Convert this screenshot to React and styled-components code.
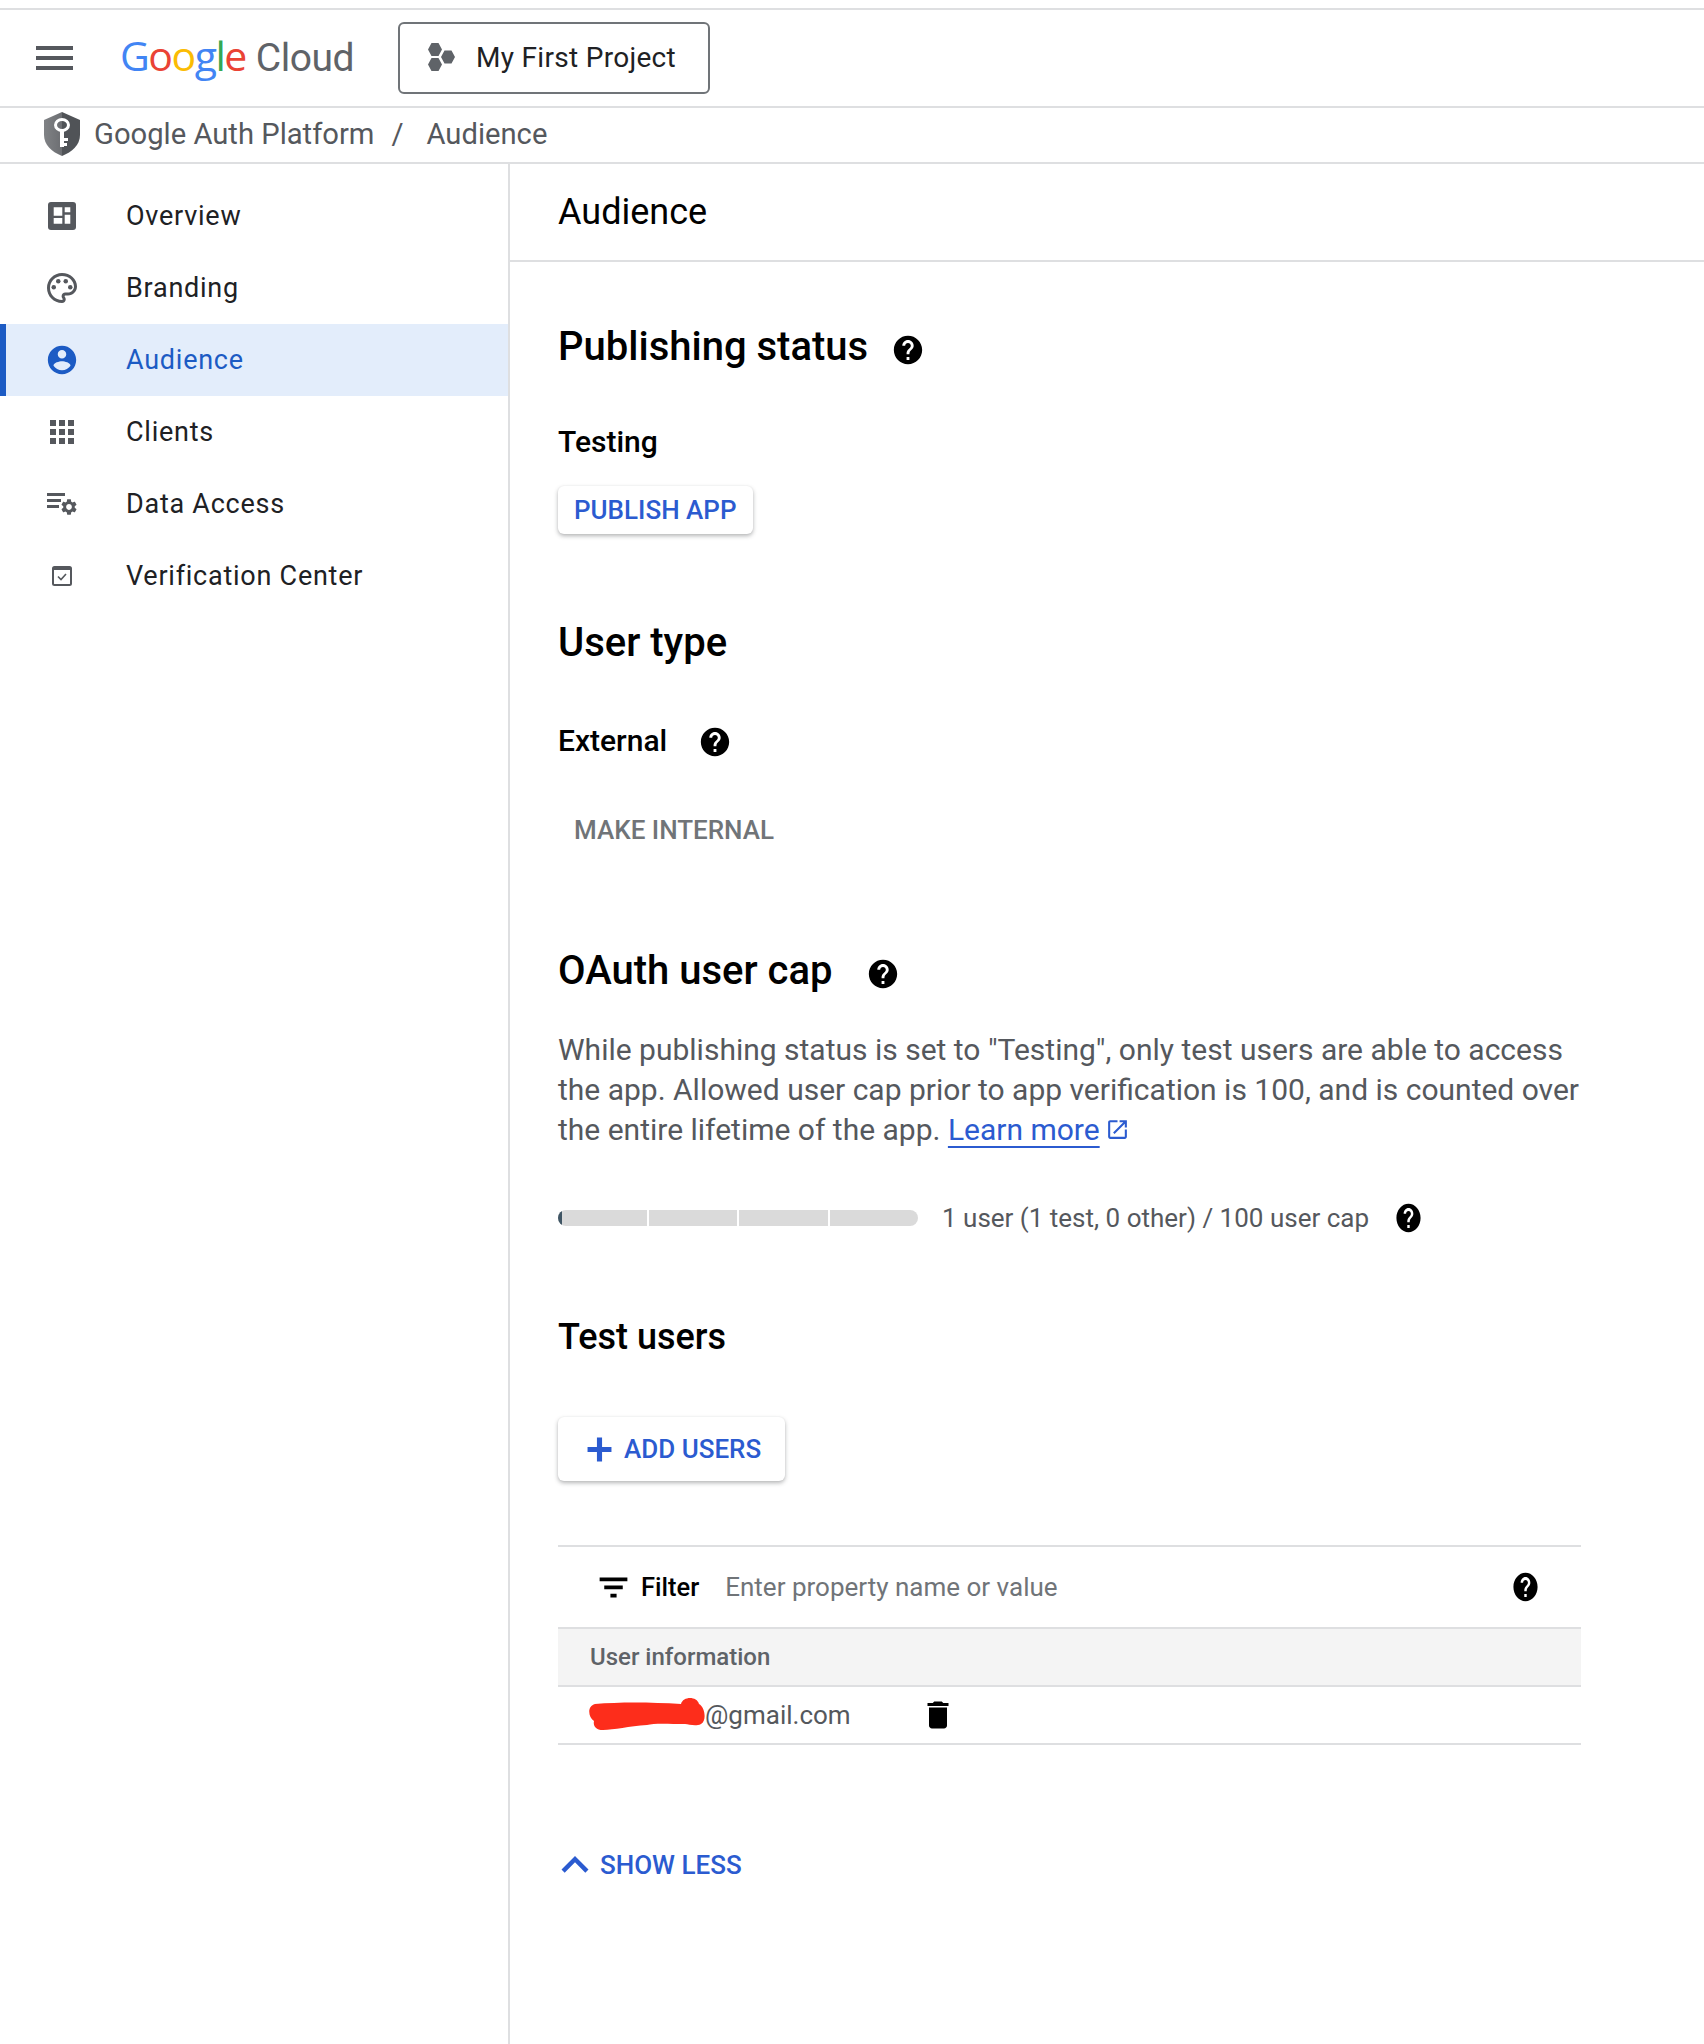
import React from 'react'
import styled, { createGlobalStyle } from 'styled-components'

const GlobalStyle = createGlobalStyle`
	html, body {
		margin: 0;
		padding: 0;
		background: #fff;
		font-family: Roboto, "Liberation Sans", sans-serif;
	}
	* {
		box-sizing: border-box;
	}
`

const BLUE = '#2b5bd0'
const LINE = '#dedfe1'

const paths = {
	help: 'M12 2C6.48 2 2 6.48 2 12s4.48 10 10 10 10-4.48 10-10S17.52 2 12 2zm1 17h-2v-2h2v2zm2.07-7.75l-.9.92C13.45 12.9 13 13.5 13 15h-2v-.5c0-1.1.45-2.1 1.17-2.83l1.24-1.26c.37-.36.59-.86.59-1.41 0-1.1-.9-2-2-2s-2 .9-2 2H8c0-2.21 1.79-4 4-4s4 1.79 4 4c0 .88-.36 1.68-.93 2.25z',
	account: 'M12 2C6.48 2 2 6.48 2 12s4.48 10 10 10 10-4.48 10-10S17.52 2 12 2zm0 3c1.66 0 3 1.34 3 3s-1.34 3-3 3-3-1.34-3-3 1.34-3 3-3zm0 14.2c-2.5 0-4.71-1.28-6-3.22.03-1.99 4-3.08 6-3.08 1.99 0 5.97 1.09 6 3.08-1.29 1.94-3.5 3.22-6 3.22z',
	palette: 'M12 22C6.49 22 2 17.51 2 12S6.49 2 12 2s10 4.04 10 9c0 3.31-2.69 6-6 6h-1.77c-.28 0-.5.22-.5.5 0 .12.05.23.13.33.41.47.64 1.06.64 1.67 0 1.38-1.12 2.5-2.5 2.5zm0-18c-4.41 0-8 3.59-8 8s3.59 8 8 8c.28 0 .5-.22.5-.5 0-.16-.08-.28-.14-.35-.41-.46-.63-1.05-.63-1.65 0-1.38 1.12-2.5 2.5-2.5H16c2.21 0 4-1.79 4-4 0-3.86-3.59-7-8-7z',
	trash: 'M6 19c0 1.1.9 2 2 2h8c1.1 0 2-.9 2-2V7H6v12zM19 4h-3.5l-1-1h-5l-1 1H5v2h14V4z',
	filter: 'M10 18.500h4v-2.500h-4v2.500zM3 5.500V8h18V5.500H3zm3 7.700h12v-2.500H6v2.500z',
	plus: 'M19 13.500h-5.500V19h-3v-5.500H5v-3h5.500V5h3v5.500H19z',
	chevron: 'M7.41 15.41L12 10.83l4.59 4.58L18 14l-6-6-6 6z',
	external: 'M19 19H5V5h7V3H5c-1.11 0-2 .9-2 2v14c0 1.1.89 2 2 2h14c1.1 0 2-.9 2-2v-7h-2v7zM14 3v2h3.59l-9.83 9.83 1.41 1.41L19 6.41V10h2V3h-7z',
	apps: 'M4 4h4v4H4zM10 4h4v4h-4zM16 4h4v4h-4zM4 10h4v4H4zM10 10h4v4h-4zM16 10h4v4h-4zM4 16h4v4H4zM10 16h4v4h-4zM16 16h4v4h-4z',
}

const GEAR = 'M19.14 12.94c.04-.3.06-.61.06-.94 0-.32-.02-.64-.07-.94l2.03-1.58c.18-.14.23-.41.12-.61l-1.92-3.32c-.12-.22-.37-.29-.59-.22l-2.39.96c-.5-.38-1.03-.7-1.62-.94l-.36-2.54c-.04-.24-.24-.41-.48-.41h-3.84c-.24 0-.43.17-.47.41l-.36 2.54c-.59.24-1.13.57-1.62.94l-2.39-.96c-.22-.08-.47 0-.59.22L2.74 8.87c-.12.21-.08.47.12.61l2.03 1.58c-.05.3-.09.63-.09.94s.02.64.07.94l-2.03 1.58c-.18.14-.23.41-.12.61l1.92 3.32c.12.22.37.29.59.22l2.39-.96c.5.38 1.03.7 1.62.94l.36 2.54c.05.24.24.41.48.41h3.84c.24 0 .44-.17.47-.41l.36-2.54c.59-.24 1.13-.56 1.62-.94l2.39.96c.22.08.47 0 .59-.22l1.92-3.32c.12-.22.07-.47-.12-.61l-2.01-1.58zM12 15.6c-1.98 0-3.6-1.62-3.6-3.6s1.62-3.6 3.6-3.6 3.6 1.62 3.6 3.6-1.62 3.6-3.6 3.6z'

const Icon = ({ name, size = 24, width, color = '#000' }) => (
	<Svg viewBox='0 0 24 24' preserveAspectRatio='none' $size={size} $width={width || size} $color={color}>
		<path d={paths[name]}/>
		{name === 'palette' && (
			<>
				<circle cx='6.5' cy='11.5' r='1.5'/>
				<circle cx='9.5' cy='7.5' r='1.5'/>
				<circle cx='14.5' cy='7.5' r='1.5'/>
				<circle cx='17.5' cy='11.5' r='1.5'/>
			</>
		)}
	</Svg>
)

const Help = ({ gap, lift = 7, narrow }) => (
	<HelpSlot $gap={gap} $lift={lift}>
		<Icon name='help' size={34} width={narrow ? 29 : 34}/>
	</HelpSlot>
)

const DashboardIcon = () => (
	<svg width='28' height='28' viewBox='0 0 28 28'>
		<rect width='28' height='28' rx='3' fill='#55585d'/>
		<path d='M5.700 5.300h8.600v8.400H5.700zM5.700 16h8.600v5.700H5.700zM16.700 5.300h5.600v5H16.700zM16.700 12.700h5.600v9H16.700z' fill='#fff'/>
	</svg>
)

const DataAccessIcon = () => (
	<svg width='30' height='23' viewBox='0 0 30 23'>
		<path d='M0 0h18v3H0zM0 6h14v3H0zM0 12h12v3H0z' fill='#55585d'/>
		<path d={GEAR} transform='translate(12.4 4.4) scale(0.8)' fill='#55585d'/>
	</svg>
)

const VerificationIcon = () => (
	<svg width='28' height='28' viewBox='0 0 28 28'>
		<rect x='5' y='5' width='18' height='18' rx='1.5' fill='none' stroke='#55585d' strokeWidth='2'/>
		<path d='M5 5h18v3H5z' fill='#55585d'/>
		<path d='M10 14.500l3 3 5-5.500' fill='none' stroke='#55585d' strokeWidth='1.600'/>
	</svg>
)

const ProjectIcon = () => (
	<svg width='27' height='28' viewBox='0 0 27 28'>
		<path d='M3.500 0h7l3.500 6.500-3.500 6.500h-7L0 6.500zM3.500 15h7l3.500 6.500-3.500 6.500h-7L0 21.500zM16.500 7.500h7l3.500 6.500-3.500 6.500h-7L13 14z' fill='#5f6368'/>
	</svg>
)

const ShieldIcon = () => (
	<svg width='36' height='44' viewBox='0 0 36 44'>
		<defs>
			<linearGradient id='shield' x1='0' x2='1' y1='0' y2='0'>
				<stop offset='0' stopColor='#808285'/>
				<stop offset='0.5' stopColor='#6c6e72'/>
				<stop offset='0.5' stopColor='#505357'/>
				<stop offset='1' stopColor='#505357'/>
			</linearGradient>
		</defs>
		<path d='M18 0L36 8v15c0 10-8 17-18 21C8 40 0 33 0 23V8z' fill='url(#shield)'/>
		<ellipse cx='18' cy='13' rx='6.500' ry='5.500' fill='none' stroke='#fff' strokeWidth='3'/>
		<path d='M16 18h4v17h-4zM19 26h5v3h-5zM19 31h4v3h-4z' fill='#fff'/>
	</svg>
)

const GoogleLogo = () => (
	<Logo>
		<LogoLetter $color='#4285f4'>G</LogoLetter>
		<LogoLetter $color='#ea4335'>o</LogoLetter>
		<LogoLetter $color='#fbbc04'>o</LogoLetter>
		<LogoLetter $color='#4285f4'>g</LogoLetter>
		<LogoLetter $color='#34a853'>l</LogoLetter>
		<LogoLetter $color='#ea4335'>e</LogoLetter>
		<LogoCloud>Cloud</LogoCloud>
	</Logo>
)

const navItems = [
	{ label: 'Overview', icon: <DashboardIcon/> },
	{ label: 'Branding', icon: <Icon name='palette' size={36} color='#55585d'/> },
	{ label: 'Audience', icon: <Icon name='account' size={34} color='#1c5bc4'/>, active: true },
	{ label: 'Clients', icon: <Icon name='apps' size={36} color='#55585d'/> },
	{ label: 'Data Access', icon: <DataAccessIcon/> },
	{ label: 'Verification Center', icon: <VerificationIcon/> },
]

export default function App () {
	return (
		<Page>
			<GlobalStyle/>
			<TopStrip/>
			<Header>
				<MenuButton>
					<MenuBar/>
					<MenuBar/>
					<MenuBar/>
				</MenuButton>
				<GoogleLogo/>
				<ProjectButton>
					<ProjectIcon/>
					<span>My First Project</span>
				</ProjectButton>
			</Header>
			<Breadcrumb>
				<ShieldIcon/>
				<Crumb>Google Auth Platform</Crumb>
				<CrumbSlash>/</CrumbSlash>
				<Crumb>Audience</Crumb>
			</Breadcrumb>
			<Body>
				<Sidebar>
					{navItems.map(item => (
						<NavItem key={item.label} $active={item.active}>
							<NavIcon>{item.icon}</NavIcon>
							<span>{item.label}</span>
						</NavItem>
					))}
				</Sidebar>
				<Main>
					<TitleBar>Audience</TitleBar>
					<Content>
						<Heading $top={60}>Publishing status<Help gap={23}/></Heading>
						<SubHeading $top={51}>Testing</SubHeading>
						<RaisedButton $top={25} $height={48} $left={16} $right={16}>PUBLISH APP</RaisedButton>

						<Heading $top={84}>User type</Heading>
						<SubHeading $top={54}>External<Help gap={31} lift={4}/></SubHeading>
						<FlatButton>MAKE INTERNAL</FlatButton>

						<Heading $top={92}>OAuth user cap<Help gap={34}/></Heading>
						<Paragraph>
							While publishing status is set to "Testing", only test users are able to access
							the app. Allowed user cap prior to app verification is 100, and is counted over
							the entire lifetime of the app. <LearnMore>Learn more</LearnMore>
							<ExternalSlot><Icon name='external' size={25} color={BLUE}/></ExternalSlot>
						</Paragraph>

						<CapRow>
							<CapBar>
								<CapFill/>
								<CapSegment/>
								<CapSegment/>
								<CapSegment/>
								<CapSegment/>
							</CapBar>
							<CapLabel>1 user (1 test, 0 other) / 100 user cap</CapLabel>
							<Help gap={25} lift={0} narrow/>
						</CapRow>

						<Heading $top={75} $size={36}>Test users</Heading>
						<RaisedButton $top={56} $height={64} $left={21} $right={24}>
							<Icon name='plus' size={41} color={BLUE}/>
							ADD USERS
						</RaisedButton>

						<Table>
							<FilterRow>
								<Icon name='filter' size={37}/>
								<FilterLabel>Filter</FilterLabel>
								<FilterHint>Enter property name or value</FilterHint>
								<Help lift={0} narrow/>
							</FilterRow>
							<HeaderRow>User information</HeaderRow>
							<UserRow>
								<EmailCell>
									<Scribble viewBox='0 0 117 34'>
										<path d='M6 7C30 5 60 5 92 7C94 -1 108 -1 110 7C116 10 118 24 112 27C106 30 100 27 96 27C80 27 65 26 58 28C40 29 25 33 14 33C6 33 4 28 5 24C-1 20 -2 9 6 7z' fill='#fd2d1b'/>
									</Scribble>
									@gmail.com
								</EmailCell>
								<TrashSlot><Icon name='trash' size={36}/></TrashSlot>
							</UserRow>
						</Table>

						<ShowLess>
							<ChevronSlot><Icon name='chevron' size={54} color={BLUE}/></ChevronSlot>
							SHOW LESS
						</ShowLess>
					</Content>
				</Main>
			</Body>
		</Page>
	)
}

const Page = styled.div`
	display: flex;
	flex-direction: column;
	width: 100%;
	height: 2044px;
	overflow: hidden;
	background: #fff;
`

const TopStrip = styled.div`
	height: 10px;
	flex: none;
	border-bottom: 2px solid ${LINE};
`

const Header = styled.header`
	display: flex;
	align-items: center;
	height: 98px;
	flex: none;
	padding-left: 36px;
	border-bottom: 2px solid ${LINE};
`

const MenuButton = styled.div`
	display: flex;
	flex-direction: column;
	justify-content: space-between;
	width: 37px;
	height: 24px;
`

const MenuBar = styled.div`
	height: 4px;
	background: #55585d;
`

const Logo = styled.div`
	display: flex;
	align-items: baseline;
	width: 233px;
	margin: 0 0 6px 47px;
	font-family: "Open Sans", Roboto, sans-serif;
	font-size: 41px;
	letter-spacing: -1.500px;
`

const LogoLetter = styled.span`
	color: ${props => props.$color};
`

const LogoCloud = styled.span`
	margin-left: 10px;
	color: #5f6368;
	font-family: Roboto, sans-serif;
	font-size: 39px;
	letter-spacing: -0.500px;
`

const ProjectButton = styled.div`
	display: flex;
	align-items: center;
	gap: 21px;
	width: 312px;
	height: 72px;
	margin-left: 45px;
	padding: 0 0 2px 28px;
	border: 2px solid #707478;
	border-radius: 6px;
	color: #202124;
	font-size: 28px;
	letter-spacing: 0.300px;
`

const Breadcrumb = styled.nav`
	display: flex;
	align-items: center;
	height: 56px;
	flex: none;
	padding: 0 0 2px 44px;
	border-bottom: 2px solid ${LINE};
	color: #55585d;
	font-size: 29.2px;
`

const Crumb = styled.span`
	margin-left: 14px;
`

const CrumbSlash = styled.span`
	margin: 0 9px 0 17px;
`

const Body = styled.div`
	display: grid;
	grid-template-columns: 510px 1fr;
	flex: 1;
`

const Sidebar = styled.aside`
	padding-top: 16px;
	border-right: 2px solid ${LINE};
`

const NavItem = styled.div`
	display: flex;
	align-items: center;
	height: 72px;
	padding-left: ${props => props.$active ? '0' : '6px'};
	border-left: ${props => props.$active ? '6px solid #1c5bc4' : 'none'};
	background: ${props => props.$active ? '#e3edfb' : 'transparent'};
	color: ${props => props.$active ? '#1c5bc4' : '#202124'};
	font-size: 27px;
	letter-spacing: 0.750px;
`

const NavIcon = styled.div`
	display: flex;
	align-items: center;
	justify-content: center;
	width: 36px;
	height: 36px;
	margin: 0 46px 0 38px;
`

const Svg = styled.svg`
	display: block;
	flex: none;
	width: ${props => props.$width}px;
	height: ${props => props.$size}px;
	fill: ${props => props.$color};
`

const Main = styled.main`
	min-width: 0;
`

const TitleBar = styled.div`
	display: flex;
	align-items: center;
	height: 98px;
	padding: 0 0 0 48px;
	border-bottom: 2px solid ${LINE};
	color: #000;
	font-size: 36px;
`

const Content = styled.div`
	padding: 0 122px 0 48px;
`

const Heading = styled.h2`
	display: flex;
	align-items: center;
	height: 48px;
	margin: ${props => props.$top}px 0 0;
	color: #000;
	font-size: ${props => props.$size || 40}px;
	font-weight: 500;
`

const SubHeading = styled.h3`
	display: flex;
	align-items: center;
	height: 40px;
	margin: ${props => props.$top}px 0 0;
	color: #000;
	font-size: 30px;
	font-weight: 500;
`

const HelpSlot = styled.span`
	display: inline-flex;
	margin-left: ${props => props.$gap || 0}px;
	margin-top: ${props => props.$lift}px;
`

const RaisedButton = styled.div`
	display: flex;
	align-items: center;
	width: fit-content;
	gap: 4px;
	height: ${props => props.$height}px;
	margin-top: ${props => props.$top}px;
	padding: 0 ${props => props.$right}px 0 ${props => props.$left}px;
	border-radius: 6px;
	background: #fff;
	box-shadow: 0 2px 4px rgba(60, 64, 67, 0.38), 0 0 2px rgba(60, 64, 67, 0.06);
	color: ${BLUE};
	font-size: 26px;
	font-weight: 500;
`

const FlatButton = styled.div`
	display: flex;
	align-items: center;
	height: 48px;
	margin-top: 46px;
	padding-left: 16px;
	color: #707478;
	font-size: 26px;
	font-weight: 500;
`

const Paragraph = styled.p`
	width: 1040px;
	margin: 36px 0 0;
	color: #55585d;
	font-size: 30px;
	line-height: 40px;
`

const LearnMore = styled.a`
	color: ${BLUE};
	text-decoration: underline;
	text-underline-offset: 6px;
	text-decoration-thickness: 2px;
`

const ExternalSlot = styled.span`
	display: inline-block;
	vertical-align: -2px;
	margin-left: 5px;
`

const CapRow = styled.div`
	display: flex;
	align-items: center;
	height: 40px;
	margin-top: 48px;
`

const CapBar = styled.div`
	display: flex;
	gap: 2px;
	position: relative;
	width: 360px;
	height: 16px;
	border-radius: 8px;
	overflow: hidden;
`

const CapSegment = styled.div`
	flex: 1;
	background: #dadada;
`

const CapFill = styled.div`
	position: absolute;
	left: 0;
	top: 0;
	width: 4px;
	height: 100%;
	background: #3f5564;
`

const CapLabel = styled.span`
	margin-left: 24px;
	color: #55585d;
	font-size: 26px;
`

const Table = styled.div`
	width: 1023px;
	margin-top: 64px;
	border-top: 2px solid ${LINE};
`

const FilterRow = styled.div`
	display: flex;
	align-items: center;
	height: 82px;
	padding: 0 41px 0 37px;
	border-bottom: 2px solid ${LINE};
`

const FilterLabel = styled.span`
	margin-left: 9px;
	color: #000;
	font-size: 25.500px;
	font-weight: 500;
`

const FilterHint = styled.span`
	flex: 1;
	margin-left: 26px;
	color: #707478;
	font-size: 26px;
`

const HeaderRow = styled.div`
	display: flex;
	align-items: center;
	height: 58px;
	padding-left: 32px;
	border-bottom: 2px solid ${LINE};
	background: #f4f4f4;
	color: #5f6368;
	font-size: 24px;
	font-weight: 500;
`

const UserRow = styled.div`
	display: flex;
	align-items: center;
	height: 58px;
	padding-left: 31px;
	border-bottom: 2px solid ${LINE};
`

const EmailCell = styled.div`
	display: flex;
	align-items: center;
	width: 331px;
	color: #55585d;
	font-size: 26px;
`

const Scribble = styled.svg`
	display: block;
	width: 117px;
	height: 34px;
	margin: -3px -1px 0 0;
`

const TrashSlot = styled.div`
	display: flex;
`

const ChevronSlot = styled.span`
	display: inline-flex;
	margin: 0 -2px 0 -10px;
`

const ShowLess = styled.div`
	display: flex;
	align-items: center;
	height: 40px;
	margin-top: 100px;
	color: ${BLUE};
	font-size: 26px;
	font-weight: 500;
`
